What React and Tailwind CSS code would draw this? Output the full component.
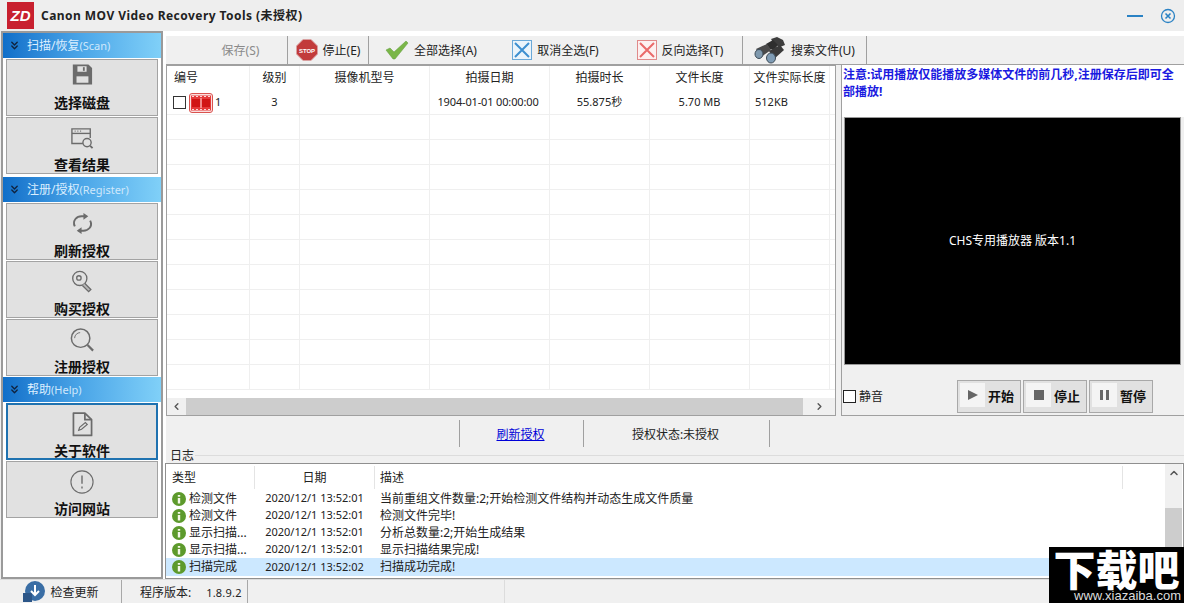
import { ChevronLeft, ChevronRight, ChevronUp, ChevronsDown } from "lucide-react";

const font = "font-['Noto_Sans','Noto_Sans_CJK_SC',sans-serif]";

const GREY = "#6b6b6b";

const SaveIcon = () => (
  <svg width="22" height="23" viewBox="0 0 24 24">
    <path d="M2 1h17l4 4v18H2z" fill={GREY} />
    <path d="M7 3h10v6H7z" fill="#e1e1e1" />
    <path d="M13 4h2v4h-2z" fill={GREY} />
    <path d="M6 14h13v7H6z" fill="#e1e1e1" />
  </svg>
);

const ResultIcon = () => (
  <svg width="24" height="22" viewBox="0 0 26 24" fill="none" stroke={GREY} strokeWidth="1.5">
    <path d="M14 18H2V2h20v10" />
    <path d="M2 7h20" />
    <circle cx="18.5" cy="17" r="4.5" />
    <path d="M22 20.5l2.5 2.5" strokeWidth="2" />
    <path d="M5 4.500h1M8 4.500h1M11 4.500h1" />
  </svg>
);

const RefreshIcon = () => (
  <svg width="23" height="23" viewBox="0 0 24 24" fill="none" stroke={GREY} strokeWidth="2">
    <path d="M4 15C1 9 6 4 12 4.500h4" />
    <path d="M20 9c3 6-2 11-8 10.500H8" />
    <path d="M13 1l5 3.500-5 3.500z" fill={GREY} stroke="none" />
    <path d="M11 16l-5 3.500 5 3.500z" fill={GREY} stroke="none" />
  </svg>
);

const KeyIcon = () => (
  <svg width="22" height="23" viewBox="0 0 24 26" fill="none" stroke={GREY} strokeWidth="1.5">
    <circle cx="9.500" cy="9.500" r="8" />
    <circle cx="8.500" cy="9" r="2.500" />
    <path d="M15 15l7 7-2.500 2.500-7-7" fill="#b9b9b9" />
  </svg>
);

const SearchIcon = () => (
  <svg width="24" height="24" viewBox="0 0 26 26" fill="none" stroke={GREY} strokeWidth="1.6">
    <circle cx="11.500" cy="11" r="10" />
    <path d="M5 11c0-3.500 3-6 6-6" strokeWidth="1" />
    <path d="M19 18.500l6 6" strokeWidth="2.400" />
  </svg>
);

const DocIcon = () => (
  <svg width="21" height="25" viewBox="0 0 22 26" fill="none" stroke={GREY} strokeWidth="1.8">
    <path d="M1.500 1h12l7 7v16.500h-19z" strokeLinejoin="round" />
    <path d="M13.500 1v7h7" />
    <path d="M7 19l1-3 6-5 2 2-6 5z" strokeWidth="1.200" />
  </svg>
);

const InfoIcon = () => (
  <svg width="24" height="24" viewBox="0 0 26 26" fill="none" stroke={GREY} strokeWidth="1.200">
    <circle cx="13" cy="13" r="12" />
    <path d="M13 6v9M13 18v2" strokeWidth="1.500" />
  </svg>
);

const sections = [
  {
    title: "扫描/恢复",
    en: "(Scan)",
    gap: "mb-[2px]",
    items: [
      { label: "选择磁盘", icon: <SaveIcon />, first: true },
      { label: "查看结果", icon: <ResultIcon /> },
    ],
  },
  {
    title: "注册/授权",
    en: "(Register)",
    items: [
      { label: "刷新授权", icon: <RefreshIcon /> },
      { label: "购买授权", icon: <KeyIcon /> },
      { label: "注册授权", icon: <SearchIcon /> },
    ],
  },
  {
    title: "帮助",
    en: "(Help)",
    items: [
      { label: "关于软件", icon: <DocIcon />, active: true },
      { label: "访问网站", icon: <InfoIcon /> },
    ],
  },
];

const Sidebar = () => (
  <div className="w-[162px] ml-px border-2 border-[#9a9a9a] bg-white flex flex-col shrink-0">
    {sections.map((s) => (
      <div key={s.title} className={`flex flex-col ${s.gap || ""}`}>
        <div className="h-[25px] mb-[1px] flex items-center pl-[5px] gap-[6px] bg-gradient-to-r from-[#0f6fc9] via-[#4ba6e8] to-[#80d0f8] text-[12px]">
          <ChevronsDown size={13} strokeWidth={2.5} className="text-[#10233f]" />
          <span className="leading-none text-[#dcefff]">
            {s.title}
            <span className="text-[11px] text-[#cfe8fb]">{s.en}</span>
          </span>
        </div>
        {s.items.map((it) => (
          <div
            key={it.label}
            className={`h-[57px] mx-[3px] mb-[1px] bg-[#e1e1e1] flex flex-col items-center overflow-hidden ${
              it.active ? "border-2 border-[#1f72b0]" : "border border-[#a3a3a3]"
            }`}
          >
            <div className={`flex justify-center shrink-0 ${it.first ? "h-[35px] items-start pt-[3px]" : it.active ? "h-[38px] items-center" : "h-[39px] items-center"}`}>
              {it.icon}
            </div>
            <div className="text-[14px] leading-[16px] font-bold text-[#111] shrink-0">{it.label}</div>
          </div>
        ))}
      </div>
    ))}
  </div>
);

const StopIcon = () => (
  <svg width="22" height="22" viewBox="0 0 22 22">
    <path d="M7 0.500h8l6.500 6.500v8L15 21.500H7L0.500 15V7z" fill="#c23b3b" stroke="#d9a0a0" />
    <text x="11" y="13.500" textAnchor="middle" fontSize="6" fontWeight="700" fill="#fff" fontFamily="Liberation Sans">STOP</text>
  </svg>
);

const CheckIcon = () => (
  <svg width="24" height="20" viewBox="0 0 24 20">
    <path d="M1 10l4-2 4 4L21 1l2 2L10 19h-2z" fill="#7ab648" stroke="#5f9a38" strokeWidth="0.500" />
  </svg>
);

const CrossBox = ({ color, border, bg }) => (
  <svg width="20" height="20" viewBox="0 0 20 20" fill="none">
    <rect x="0.500" y="0.500" width="19" height="19" stroke={border} fill={bg} />
    <path d="M3 3l14 14M17 3L3 17" stroke={color} strokeWidth="2" />
  </svg>
);

const BinocularIcon = () => (
  <svg width="32" height="28" viewBox="0 0 32 28">
    <path d="M17 3l6-2 6 3 2 5-5 2-6-3z" fill="#3d3d3d" />
    <path d="M12 8l7-4 5 5-4 5-4-1z" fill="#2e2e2e" />
    <path d="M2 13l11-5 4 6-10 7z" fill="#4a4a4a" />
    <ellipse cx="5" cy="18" rx="4" ry="4.500" fill="#7f99ae" stroke="#3d4b57" />
    <path d="M15 15l11-6 4 5-10 9z" fill="#3a3a3a" />
    <ellipse cx="17" cy="22" rx="4.500" ry="5" fill="#7f9cb5" stroke="#3d4b57" />
  </svg>
);

const Tool = ({ w, icon, label, sep, dim, pad }) => (
  <div
    className={`h-full flex items-center justify-center gap-[5px] shrink-0 ${sep ? "border-r border-[#a0a0a0]" : ""} ${
      dim ? "text-[#8a8a8a]" : "text-[#222]"
    } ${pad || ""}`}
    style={{ width: w }}
  >
    {icon}
    <span className="text-[12px] pt-[2px]">{label}</span>
  </div>
);

const Toolbar = () => (
  <div className="h-[29px] mt-[5px] flex items-center bg-[#f0f0f0] border-b border-[#a0a0a0]">
    <Tool w={122} label="保存(S)" sep dim pad="pl-[28px]" />
    <Tool w={81} icon={<StopIcon />} label="停止(E)" sep />
    <Tool w={124} icon={<CheckIcon />} label="全部选择(A)" />
    <Tool w={125} icon={<CrossBox color="#3d8fd0" border="#6aa9d8" bg="#eaf4fb" />} label="取消全选(F)" />
    <Tool w={125} icon={<CrossBox color="#ea6a6a" border="#e08a8a" bg="#fdf0f0" />} label="反向选择(T)" sep />
    <Tool w={124} icon={<BinocularIcon />} label="搜索文件(U)" sep />
  </div>
);

const cols = [
  { name: "编号", w: "w-[83px]", head: "justify-start pl-[7px]" },
  { name: "级别", w: "w-[50px]" },
  { name: "摄像机型号", w: "w-[130px]" },
  { name: "拍摄日期", w: "w-[120px]" },
  { name: "拍摄时长", w: "w-[100px]" },
  { name: "文件长度", w: "w-[100px]" },
  { name: "文件实际长度", w: "w-[80px]" },
];

const FilmIcon = () => (
  <svg width="24" height="20" viewBox="0 0 24 20">
    <rect x="0.500" y="0.500" width="23" height="19" rx="2.500" fill="#fbdede" stroke="#d9534f" />
    <rect x="2" y="2.500" width="20" height="15" fill="#e53a3a" />
    <path d="M3 3.500h2M7 3.500h2M11 3.500h2M15 3.500h2M19 3.500h2M3 16.500h2M7 16.500h2M11 16.500h2M15 16.500h2M19 16.500h2" stroke="#ffd5d5" />
    <rect x="3" y="6" width="8" height="8" fill="#d11414" />
    <rect x="13" y="6" width="8" height="8" fill="#d11414" />
    <rect x="11.500" y="5" width="1" height="10" fill="#ffd5d5" />
  </svg>
);

const row1 = [null, "3", "", "1904-01-01 00:00:00", "55.875秒", "5.70 MB", "512KB"];

const FileTable = () => (
  <div className="w-[670px] h-[351px] border border-[#a0a0a0] bg-white flex flex-col shrink-0 overflow-hidden">
    <div className="h-[24px] flex shrink-0">
      {cols.map((c) => (
        <div
          key={c.name}
          className={`${c.w} flex items-center ${c.head || "justify-center"} text-[12px] text-[#222] whitespace-nowrap border-r border-[#efefef]`}
        >
          {c.name}
        </div>
      ))}
    </div>
    <div className="flex-1 flex flex-col overflow-hidden">
      <div className="h-[25px] flex shrink-0 border-b border-[#efefef]">
        {cols.map((c, i) => (
          <div
            key={c.name}
            className={`${c.w} h-full flex items-center pt-[1px] ${i === 0 || i === 6 ? "justify-start pl-[5px]" : "justify-center"} ${i === 3 ? "tracking-[-0.15px] pr-[3px]" : ""} text-[11px] text-[#222] whitespace-nowrap border-r border-[#efefef]`}
          >
            {i === 0 ? (
              <>
                <span className="w-[13px] h-[13px] border border-[#333] bg-white mr-[3px] ml-[1px]" />
                <FilmIcon />
                <span className="ml-[2px]">1</span>
              </>
            ) : (
              row1[i]
            )}
          </div>
        ))}
      </div>
      {Array.from({ length: 11 }).map((_, r) => (
        <div key={r} className="h-[25px] flex shrink-0 border-b border-[#efefef]">
          {cols.map((c) => (
            <div key={c.name} className={`${c.w} h-full border-r border-[#efefef]`} />
          ))}
        </div>
      ))}
    </div>
    <div className="h-[17px] shrink-0 flex items-center bg-[#f0f0f0]">
      <div className="w-[19px] flex justify-center">
        <ChevronLeft size={11} strokeWidth={3} className="text-[#555]" />
      </div>
      <div className="w-[617px] h-full bg-[#cdcdcd]" />
      <div className="flex-1 flex justify-center">
        <ChevronRight size={11} strokeWidth={3} className="text-[#555]" />
      </div>
    </div>
  </div>
);

const PlayBtn = ({ icon, label }) => (
  <div className="w-[64px] h-[33px] bg-[#e1e1e1] border border-[#a8a8a8] flex items-center text-[13px] font-bold text-[#111]">
    <span className="w-[25px] h-[24px] ml-[2px] bg-[#f4f4f4] flex items-center justify-center mb-[3px]">{icon}</span>
    <span className="ml-[3px]">{label}</span>
  </div>
);

const Player = () => (
  <div className="flex-1 ml-[5px] border-l border-b border-[#a0a0a0] h-[351px] flex flex-col">
    <div className="h-[52px] px-[1px] bg-white text-[12px] leading-[17px] font-bold text-[#1a1ae0] pt-[1px]">
      注意:试用播放仅能播放多媒体文件的前几秒,注册保存后即可全部播放!
    </div>
    <div className="h-[248px] mx-[2px] mr-[3px] bg-black border border-[#999] flex items-center justify-center text-white text-[12px]">
      CHS专用播放器 版本1.1
    </div>
    <div className="flex-1 flex items-center pl-[1px] pr-[31px] pt-[13px]">
      <span className="w-[13px] h-[13px] border border-[#222] bg-white mr-[3px]" />
      <span className="text-[12px] text-[#222]">静音</span>
      <div className="ml-auto flex gap-[2px]">
        <PlayBtn label="开始" icon={<span className="w-0 h-0 border-y-[5px] border-y-transparent border-l-[10px] border-l-[#666]" />} />
        <PlayBtn label="停止" icon={<span className="w-[10px] h-[10px] bg-[#666]" />} />
        <PlayBtn label="暂停" icon={<span className="flex gap-[3px]"><span className="w-[3px] h-[10px] bg-[#666]" /><span className="w-[3px] h-[10px] bg-[#666]" /></span>} />
      </div>
    </div>
  </div>
);

const InfoBar = () => (
  <div className="h-[30px] pt-[3px] flex text-[12px] text-[#222] pl-[293px]">
    <div className="w-[125px] h-full border-x border-[#a0a0a0] flex items-center justify-center pt-[3px] pr-[2px]">
      <span className="text-[#0000d8] underline">刷新授权</span>
    </div>
    <div className="w-[186px] h-full border-r border-[#a0a0a0] flex items-center justify-center pt-[3px] pr-[2px]">
      授权状态:未授权
    </div>
  </div>
);

const logs = [
  ["检测文件", "2020/12/1 13:52:01", "当前重组文件数量:2;开始检测文件结构并动态生成文件质量"],
  ["检测文件", "2020/12/1 13:52:01", "检测文件完毕!"],
  ["显示扫描...", "2020/12/1 13:52:01", "分析总数量:2;开始生成结果"],
  ["显示扫描...", "2020/12/1 13:52:01", "显示扫描结果完成!"],
  ["扫描完成", "2020/12/1 13:52:02", "扫描成功完成!"],
];

const GreenDot = () => (
  <svg width="14" height="14" viewBox="0 0 14 14" className="shrink-0">
    <circle cx="7" cy="7" r="7" fill="#5d9a2c" />
    <path d="M5.800 3h2.400v1.800H5.800zM5.800 6h2.400v5.500H5.800z" fill="#f4f8e8" />
  </svg>
);

const LogPanel = () => (
  <div className="flex-1 flex flex-col -ml-[1px]">
    <div className="h-[16px] flex items-center pl-[5px]">
      <span className="text-[12px] leading-none text-[#222] pr-[1px] pt-[2px]">日志</span>
      <span className="flex-1 h-px bg-[#dcdcdc]" />
    </div>
    <div className="flex-1 border border-[#8f8f8f] bg-white flex overflow-hidden">
      <div className="flex-1 flex flex-col overflow-hidden">
        <div className="h-[25px] pt-[2px] flex shrink-0 text-[12px] text-[#222]">
          <div className="w-[89px] pl-[6px] flex items-center border-r border-[#e4e4e4]">类型</div>
          <div className="w-[120px] flex items-center justify-center border-r border-[#e4e4e4]">日期</div>
          <div className="w-[748px] pl-[5px] flex items-center border-r border-[#e4e4e4]">描述</div>
        </div>
        <div className="flex flex-col pt-[1px]">
          {logs.map((l, i) => (
            <div
              key={i}
              className={`flex items-center text-[12px] text-[#222] ${i === 4 ? "bg-[#cce8ff] h-[18px]" : "h-[17px]"}`}
            >
              <div className="w-[89px] pl-[6px] flex items-center gap-[3px] whitespace-nowrap overflow-hidden">
                <GreenDot />
                {l[0]}
              </div>
              <div className="w-[120px] pr-[1px] text-center text-[11px] whitespace-nowrap">{l[1]}</div>
              <div className="pl-[5px] whitespace-nowrap">{l[2]}</div>
            </div>
          ))}
        </div>
      </div>
      <div className="w-[17px] bg-[#f0f0f0] flex flex-col items-center shrink-0 mr-[1px]">
        <ChevronUp size={12} strokeWidth={3} className="text-[#555] mt-[3px]" />
        <div className="w-full h-[50px] bg-[#cdcdcd] mt-[29px]" />
      </div>
    </div>
  </div>
);

const Watermark = () => (
  <div className="absolute right-0 bottom-0 w-[135px] h-[56px] bg-black text-white flex flex-col items-center overflow-hidden">
    <div className="h-[42px] text-[42px] leading-[42px] font-black whitespace-nowrap font-['Noto_Sans_CJK_SC',sans-serif]">下载吧</div>
    <div className="h-[14px] text-[13px] leading-[14px] text-[#ddd] whitespace-nowrap font-['Liberation_Sans',sans-serif] pl-[22px]">www.xiazaiba.com</div>
  </div>
);

const App = () => (
  <div className={`${font} relative w-[1184px] h-[603px] bg-[#f0f0f0] flex flex-col overflow-hidden`}>
    <div className="h-[31px] shrink-0 bg-[#eeeeee] flex items-center pl-[7px] pr-[8px]">
      <div className="w-[27px] h-[27px] bg-[#c8202f] text-white text-[15px] leading-none font-bold italic flex items-center justify-center font-['Liberation_Sans',sans-serif]">
        ZD
      </div>
      <span className="ml-[7px] text-[12px] font-bold text-[#222] tracking-[0.45px]">Canon MOV Video Recovery Tools (未授权)</span>
      <span className="ml-auto w-[16px] h-[2px] bg-[#2a82c4]" />
      <svg width="16" height="16" viewBox="0 0 16 16" fill="none" stroke="#2a82c4" strokeWidth="1.300" className="ml-[17px]">
        <circle cx="8" cy="8" r="6.500" />
        <path d="M5.500 5.500l5 5M10.500 5.500l-5 5" strokeWidth="1.600" />
      </svg>
    </div>

    <div className="h-[548px] shrink-0 flex">
      <Sidebar />
      <div className="flex-1 flex flex-col pl-[3px] min-w-0 bg-white">
        <Toolbar />
        <div className="h-[352px] flex bg-[#f0f0f0]">
          <FileTable />
          <Player />
        </div>
        <div className="flex-1 flex flex-col bg-[#f0f0f0]">
          <InfoBar />
          <LogPanel />
        </div>
      </div>
    </div>

    <div className="flex-1 flex text-[12px] text-[#222] bg-[#f0f0f0] border-t border-[#dcdcdc]">
      <div className="w-[122px] flex items-center justify-center gap-[4px] border-r border-[#a8a8a8]">
        <svg width="24" height="22" viewBox="0 0 24 22">
          <circle cx="13" cy="10" r="10" fill="#3a6ea5" />
          <path d="M1 21V12h9v9z" fill="#2c5688" />
          <path d="M13 4v10M9 10l4 4 4-4" stroke="#fff" strokeWidth="2" fill="none" />
        </svg>
        <span className="pt-[3px]">检查更新</span>
      </div>
      <div className="w-[126px] flex items-center pl-[18px] gap-[15px] border-r border-[#a8a8a8] pt-[3px] whitespace-nowrap">
        <span>程序版本:</span>
        <span className="text-[11px] tracking-[0.2px]">1.8.9.2</span>
      </div>
      <div className="w-[257px] border-r border-[#dcdcdc]" />
    </div>

    <Watermark />
  </div>
);

export default App;
